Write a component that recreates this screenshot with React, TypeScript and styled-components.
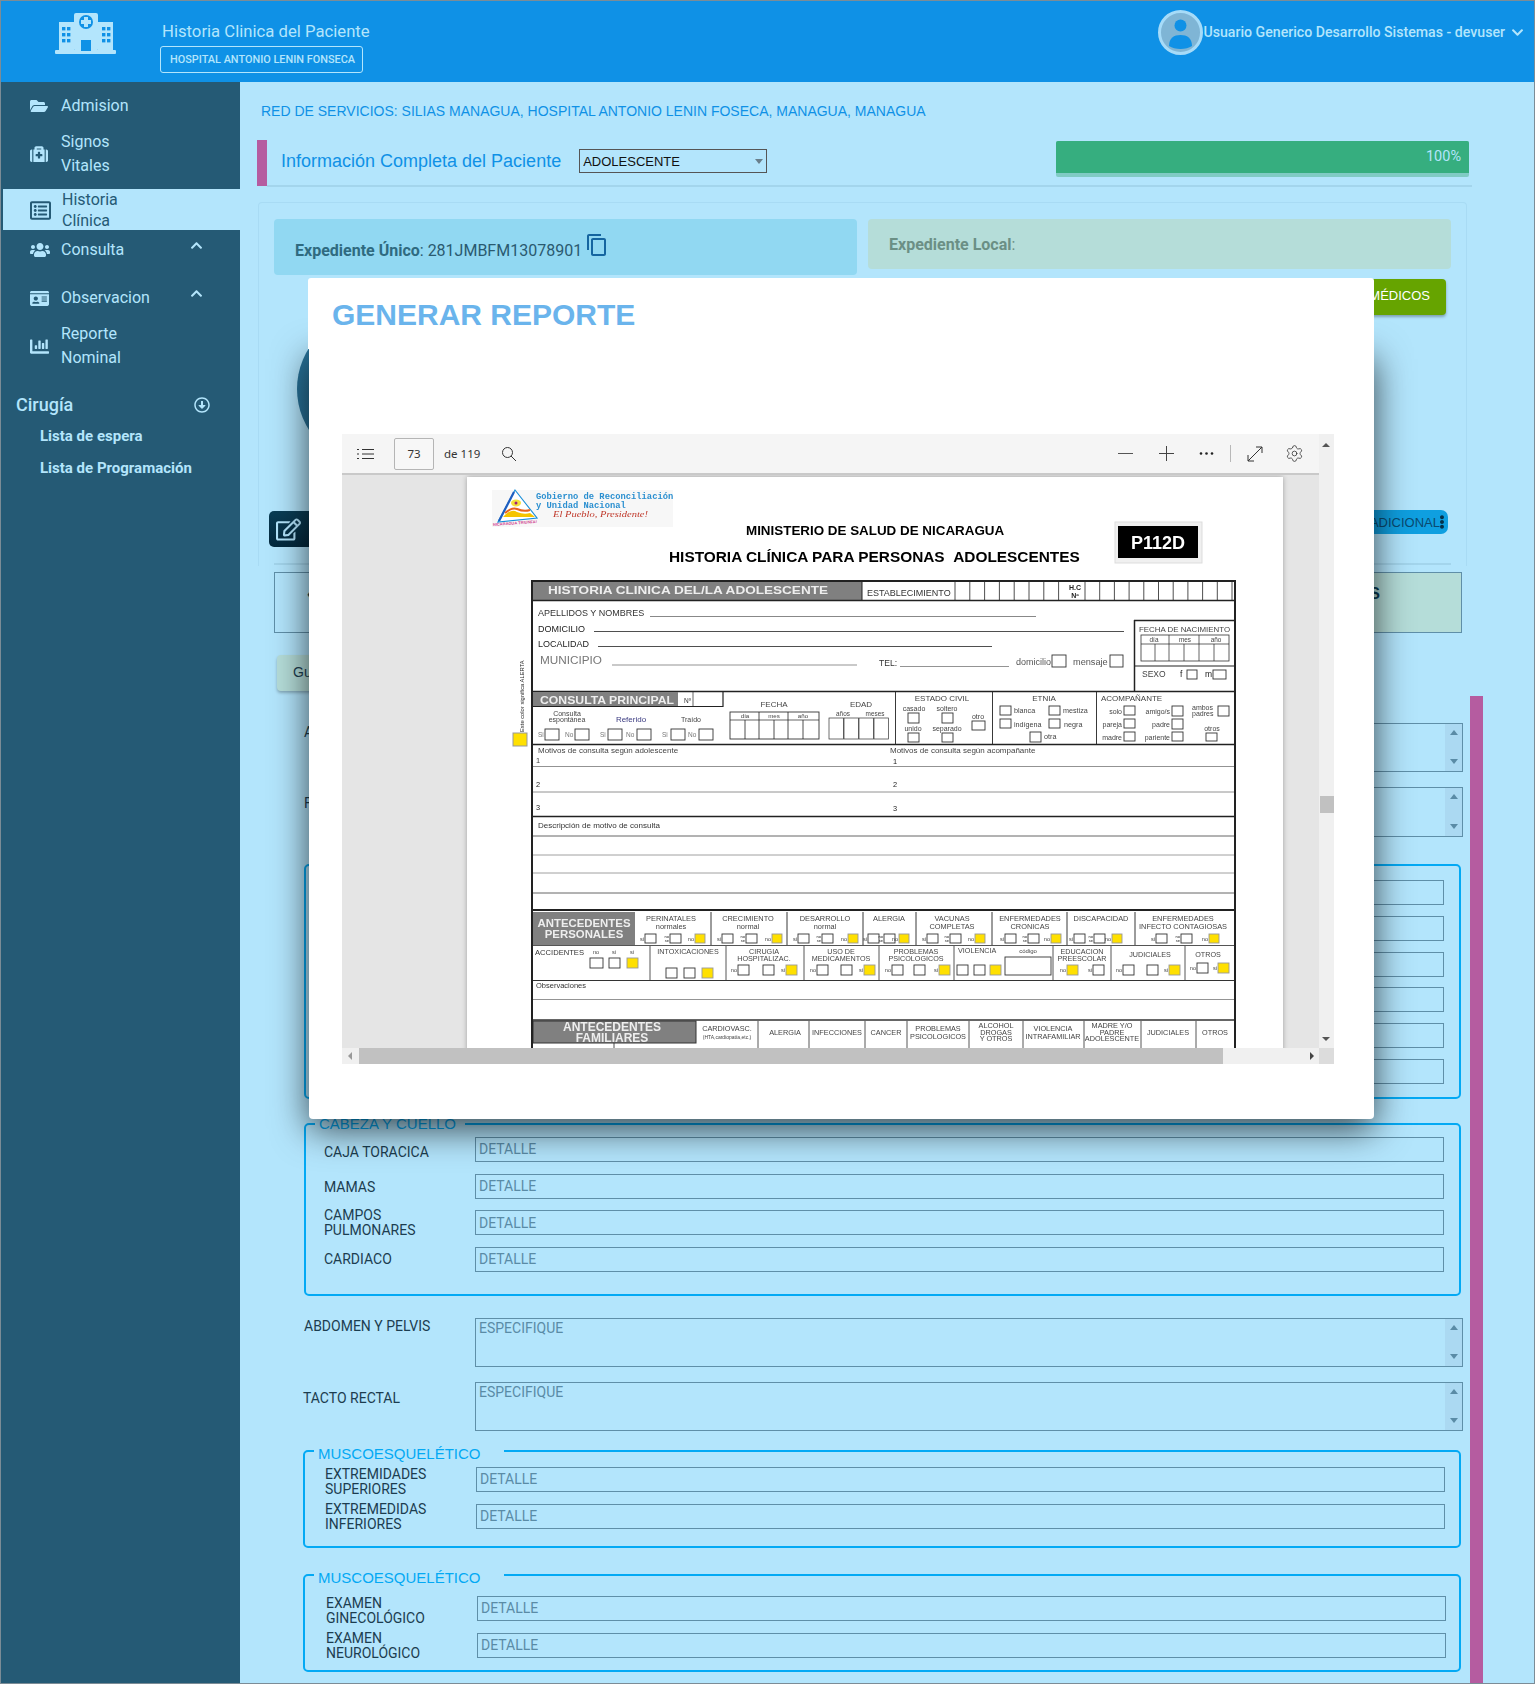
import React from "react";
import styled, { createGlobalStyle } from "styled-components";
import { FaFolderOpen, FaMedkit, FaRegListAlt, FaUsers, FaIdCard, FaChartBar, FaRegArrowAltCircleDown, FaChevronUp, FaChevronDown, FaRegEdit, FaEllipsisV } from "react-icons/fa";
import { MdContentCopy } from "react-icons/md";
import { Settings } from "lucide-react";

const Global = createGlobalStyle`
  html, body { margin: 0; padding: 0; background: #b3e5fc; }
  * { box-sizing: border-box; }
`;

const Screen = styled.div`
  position: relative; width: 1535px; height: 1684px; overflow: hidden;
  border: 1px solid #7c8c96; background: #b3e5fc;
  font-family: "Liberation Sans", Arial, sans-serif; color: #1c3d50;
`;
const Header = styled.header`
  height: 81px; background: #0f91e6; display: flex; align-items: flex-start; font-family: Roboto, sans-serif;
`;
const LogoSlot = styled.div` width: 161px; padding: 12px 0 0 54px; `;
const Brand = styled.div` padding-top: 21px; display: flex; flex-direction: column; align-items: flex-start; gap: 4px; `;
const BrandTitle = styled.div` font-size: 16.7px; line-height: 20px; color: #b3e5fc; `;
const BrandBadge = styled.div`
  height: 27px; margin-left: -2px; padding: 0 7px 0 9px; border: 1px solid #b3e5fc; border-radius: 3px; color: #b3e5fc;
  font-size: 10.9px; font-weight: 500; line-height: 25px; white-space: nowrap;
`;
const UserBox = styled.div` margin-left: auto; display: flex; align-items: center; padding: 9px 10px 0 0; color: #b3e5fc; `;
const Avatar = styled.div`
  width: 45px; height: 45px; border-radius: 50%; border: 3px solid #a6dbf8; background: #7fb5d5; overflow: hidden;
`;
const UserName = styled.span` font-size: 14.15px; font-weight: 500; margin: 0 6px 1px 0; white-space: nowrap; `;

const Body = styled.div` display: flex; height: 1602px; `;
const Sidebar = styled.nav`
  width: 239px; flex: none; background: #255a75; padding-top: 12px; font-family: Roboto, sans-serif; color: #b3e5fc;
`;
const MenuItem = styled.div<{ $mt?: number; $active?: boolean }>`
  display: flex; align-items: center; margin-top: ${p => p.$mt ?? 0}px; font-size: 16px;
  ${p => p.$active
    ? `margin-left: 2px; padding: 2px 0 0 27px; height: 41px; line-height: 20.5px; background: #b3e5fc; color: #255a75;`
    : `padding-left: 29px; line-height: 24px;`}
`;
const MenuIcon = styled.span<{ $active?: boolean }>`
  width: ${p => (p.$active ? 32 : 31)}px; flex: none; display: flex; align-items: center;
`;
const MenuCaret = styled.span` margin-left: auto; margin-right: 37px; display: flex; transform: translateY(-5px); `;
const GroupTitle = styled.div`
  display: flex; align-items: center; justify-content: space-between; margin: 23px 0 -1px; padding: 0 30px 0 15px;
  font-size: 18px; font-weight: 500; line-height: 24px;
`;
const SubLink = styled.div` margin-top: 8px; padding-left: 39px; font-size: 15px; font-weight: 700; line-height: 24px; `;

const Main = styled.main` flex: 1; min-width: 0; padding-top: 21px; `;
const Network = styled.div` margin-left: 21px; font-size: 14px; line-height: 16px; color: #0f91e6; white-space: nowrap; `;
const TitleBar = styled.div` display: flex; align-items: flex-start; margin: 21px 0 0 17px; width: 1215px; height: 47px; `;
const Accent = styled.div` width: 10px; height: 46px; flex: none; background: #b55ca0; `;
const TitleInner = styled.div`
  flex: 1; height: 47px; display: flex; align-items: flex-start; border-bottom: 2px solid #a3d5ec; padding: 1px 3px 0 14px;
`;
const PageTitle = styled.h1` margin: 9px 18px 0 0; font-size: 18px; font-weight: 400; line-height: 22px; color: #0f91e6; white-space: nowrap; `;
const SelectWrap = styled.div`
  position: relative; width: 188px; height: 24px; margin-top: 8px;
  &::after { content: ""; position: absolute; right: 4px; top: 10px; border: 4px solid transparent; border-top: 5px solid #6a7f8b; border-bottom: 0; }
`;
const Select = styled.select`
  appearance: none; width: 100%; height: 100%; border: 1px solid #555; background: transparent; padding: 0 0 0 3px;
  font: 13px "Liberation Sans", Arial, sans-serif; color: #111; border-radius: 0;
`;
const ProgressTrack = styled.div` margin-left: auto; width: 413px; height: 36px; border-radius: 2px; background: #80cbc4; overflow: hidden; `;
const ProgressFill = styled.div`
  height: 32px; background: #36ae7f; color: #b3e5fc; text-align: right; padding-right: 8px;
  font: 14.5px/32px Roboto, sans-serif;
`;

const Card = styled.section`
  margin: 15px 0 0 18px; width: 1209px; height: 364px; padding: 16px 15px 0;
  border: 1px solid #a8dbf4; border-bottom: 0; border-radius: 4px 4px 0 0; font-family: Roboto, sans-serif;
`;
const ExpRow = styled.div` display: grid; grid-template-columns: 583px 583px; gap: 11px; align-items: start; `;
const ExpUnique = styled.div`
  height: 56px; background: #91d8f2; border-radius: 4px; padding: 6px 0 0 21px; display: flex; align-items: center; gap: 3px;
  font-size: 16px; color: #2a5a70;
  b { color: #2f6a80; font-weight: 700; }
  svg { color: #1565a0; transform: translateY(-5px); }
`;
const ExpLocal = styled.div`
  height: 50px; background: #b5ddd9; border-radius: 4px; padding-left: 21px; font-size: 16px; line-height: 52px; color: #6b8f85;
  b { font-weight: 700; }
`;
const ActionRow = styled.div` display: flex; justify-content: flex-end; margin-top: 4px; padding-right: 5px; `;
const GreenButton = styled.button`
  height: 36px; width: 240px; border: 0; border-radius: 4px; background: #66a400; color: #fff; text-align: right; padding: 0 16px 4px 0;
  font: 13px "Liberation Sans", Arial, sans-serif; box-shadow: 0 2px 3px rgba(0,0,0,.3);
`;
const PatientCircle = styled.div`
  width: 152px; height: 152px; margin: -2px 0 0 23px; border-radius: 50%;
  background: radial-gradient(circle at 70% 50%, #3f93bd, #226a90);
`;
const ToolsRow = styled.div` display: flex; justify-content: space-between; align-items: flex-start; margin: 46px 3px 0 -5px; `;
const EditButton = styled.button`
  height: 36px; width: 120px; border: 0; border-radius: 5px; background: linear-gradient(#0a3d55, #04293d); color: #b3e5fc;
  display: flex; align-items: center; gap: 8px; padding: 0 0 0 7px; font: 14px Roboto, sans-serif;
`;
const ExtraButton = styled.button`
  height: 24px; width: 200px; margin-top: -1px; border: 0; border-radius: 7px; background: #0f9fe0; color: #0a4a70; display: flex; align-items: center;
  justify-content: flex-end; padding: 0; font: 13px "Liberation Sans", Arial, sans-serif; white-space: nowrap;
  svg { margin: 0 -1px 0 -5px; flex: none; }
`;
const CardRule = styled.div` margin-top: 16px; height: 2px; background: #a3d5ec; `;

const TabsRow = styled.div` display: grid; grid-template-columns: 600px 588px; margin: 6px 0 0 34px; width: 1188px; height: 61px; `;
const TabLeft = styled.div` border: 1px solid #5f8fa8; border-right: 0; padding: 12px 0 0 32px; font-size: 16px; font-weight: 700; color: #0a3d55; `;
const TabRight = styled.div` border: 1px solid #5f8fa8; border-left: 0; background: #b5ddd9; text-align: right; padding: 12px 81px 0 0; font-size: 16px; font-weight: 700; color: #0a3d55; `;
const SaveButton = styled.button`
  display: block; margin: 22px 0 0 37px; height: 36px; width: 110px; border: 0; border-radius: 4px; background: #b5ddd9; color: #1c3d50;
  text-align: left; padding: 0 0 2px 16px; font: 14px "Liberation Sans", Arial, sans-serif; box-shadow: 0 2px 3px rgba(0,0,0,.25);
`;
const FormArea = styled.div` display: flex; margin: 5px 0 0 63px; align-items: stretch; font-family: Roboto, sans-serif; `;
const FormColumn = styled.div` width: 1160px; flex: none; padding-top: 27px; `;
const SideStrip = styled.div` width: 13px; margin-left: 7px; height: 988px; background: #b55ca0; flex: none; `;

const AreaRow = styled.div<{ $mt?: number; $labelTop?: number; $shift?: number }>`
  display: grid; grid-template-columns: ${p => 171 + (p.$shift ?? 0)}px 1fr; margin-top: ${p => p.$mt ?? 0}px;
  font-size: 14px; line-height: 16px; padding-left: ${p => (p.$shift ? 0 : 1)}px;
  > label { padding-top: ${p => p.$labelTop ?? 0}px; }
`;
const AreaBox = styled.div<{ $h?: number }>` display: flex; height: ${p => p.$h ?? 49}px; border: 1px solid #5f8fa8; `;
const AreaInput = styled.textarea`
  flex: 1; border: 0; background: transparent; resize: none; padding: 1px 3px; outline: 0;
  font: 14px/16px Roboto, sans-serif; color: #1c3d50;
  &::placeholder { color: #5a8ba6; opacity: 1; }
`;
const AreaScroll = styled.div`
  width: 17px; background: #abd9f2; display: flex; flex-direction: column; justify-content: space-between; align-items: center; padding: 6px 0 7px;
`;
const ArrowUp = styled.i` width: 0; height: 0; border: 4.5px solid transparent; border-top: 0; border-bottom: 5px solid #5a8ba6; `;
const ArrowDown = styled.i` width: 0; height: 0; border: 4.5px solid transparent; border-bottom: 0; border-top: 5px solid #5a8ba6; `;

const Group = styled.fieldset<{ $mt: number; $ml?: number; $pt: number; $pb: number; $pl: number; $pr: number }>`
  margin: ${p => p.$mt}px 2px 0 ${p => p.$ml ?? 0}px; min-width: 0; padding: ${p => p.$pt}px ${p => p.$pr}px ${p => p.$pb}px ${p => p.$pl}px;
  border: 2px solid #03a9f4; border-radius: 5px; display: flex; flex-direction: column;
`;
const Legend = styled.legend<{ $pr: number; $pt?: number; $ml: number }>`
  margin-left: ${p => p.$ml}px; padding: ${p => p.$pt ?? 0}px ${p => p.$pr}px 0 4px;
  font: 15px/16px "Liberation Sans", Arial, sans-serif; color: #03a9f4; white-space: nowrap;
`;
const Rows = styled.div<{ $gap: number }>` display: flex; flex-direction: column; gap: ${p => p.$gap}px; `;
const Row = styled.div<{ $drop?: number }>`
  display: grid; grid-template-columns: 151px 1fr; grid-template-rows: 25px; align-items: center; height: 25px; font-size: 14px; line-height: 15px;
  > span { padding-top: ${p => p.$drop ?? 0}px; }
`;
const Input = styled.input`
  width: 100%; height: 25px; border: 1px solid #5f8fa8; background: transparent; padding: 0 3px; outline: 0; border-radius: 0;
  font: 14px Roboto, sans-serif;
  &::placeholder { color: #5a8ba6; opacity: 1; }
`;

/* modal */
const Modal = styled.div` position: absolute; left: 307px; top: 277px; width: 1066px; `;
const ModalHead = styled.div`
  position: relative; z-index: 1; height: 71px; background: #fff; border-radius: 3px 3px 0 0; padding: 17px 0 0 24px;
  font-size: 30px; font-weight: 700; line-height: 40px; color: #6ab4ec;
`;
const ModalBody = styled.div`
  height: 770px; margin-left: 1px; background: #fff; border-radius: 0 0 4px 4px; padding: 85px 0 0 33px; box-shadow: 0 10px 36px rgba(0,0,0,.7);
`;
const Viewer = styled.div`
  width: 992px; height: 630px; display: grid; grid-template-columns: 977px 15px; grid-template-rows: 614px 16px; background: #f0f0f0;
`;
const ViewerMain = styled.div` display: flex; flex-direction: column; min-height: 0; `;
const PdfBar = styled.div`
  height: 41px; flex: none; background: #f5f5f5; border-bottom: 2px solid #c9c9c9; display: flex; align-items: center; color: #333;
  font: 11.5px "Noto Sans", sans-serif; padding-left: 15px;
`;
const PageInput = styled.div`
  width: 40px; height: 32px; margin: 0 10px 0 20px; border: 1px solid #b5b5b5; border-radius: 2px; text-align: center; line-height: 30px; background: #f7f7f7;
`;
const BarIcon = styled.svg<{ $ml: number }>` margin-left: ${p => p.$ml}px; flex: none; `;
const BarSep = styled.div` width: 1px; height: 17px; margin-left: 16px; background: #b8b8b8; `;
const GearWrap = styled.span` display: flex; margin-left: 22px; color: #333; `;
const PdfCanvas = styled.div` flex: 1; min-height: 0; background: #e5e5e5; padding: 2px 0 0 125px; overflow: hidden; `;
const PdfPage = styled.div` width: 816px; height: 600px; background: #fff; box-shadow: 0 0 5px rgba(0,0,0,.3); `;
const FormSvg = styled.svg` display: block; filter: blur(.4px); font-family: "Liberation Sans", Arial, sans-serif; `;
const VScroll = styled.div` position: relative; background: #f0f0f0; `;
const ScrollThumbV = styled.div` position: absolute; left: 1px; right: 0; top: 362px; height: 17px; background: #c1c1c1; `;
const TriUp = styled.i` position: absolute; left: 3px; top: 9px; border: 4.5px solid transparent; border-top: 0; border-bottom: 4px solid #555; `;
const TriDown = styled.i` position: absolute; left: 3px; bottom: 7px; border: 4.5px solid transparent; border-bottom: 0; border-top: 4px solid #555; `;
const HScroll = styled.div` display: flex; align-items: center; background: #f0f0f0; height: 16px; `;
const TriLeft = styled.i` width: 17px; display: block; position: relative; &::before { content: ""; position: absolute; left: 6px; top: -4px; border: 4px solid transparent; border-left: 0; border-right: 4px solid #999; } `;
const ThumbH = styled.div` width: 864px; height: 16px; background: #c1c1c1; `;
const TriRight = styled.i` margin-left: auto; margin-right: 5px; border: 4px solid transparent; border-right: 0; border-left: 4px solid #444; `;
const Corner = styled.div` background: #dcdcdc; `;

const ink = "#222";
const Tx = ({ x, y, s, z = 7.2, a = "start", f = "#444", b = false, l, ff }: { x: number; y: number; s: string; z?: number; a?: "start" | "middle" | "end"; f?: string; b?: boolean; l?: number; ff?: string }) => (
  <text x={x} y={y} fontSize={z} textAnchor={a} fill={f} fontWeight={b ? 700 : 400} textLength={l} lengthAdjust={l ? "spacingAndGlyphs" : undefined} fontFamily={ff}>{s}</text>
);
const Bx = ({ x, y, w = 11, h = 10, yl = false }: { x: number; y: number; w?: number; h?: number; yl?: boolean }) => (
  <rect x={x} y={y} width={w} height={h} fill={yl ? "#ffe000" : "#fff"} stroke={yl ? "#999" : "#333"} strokeWidth={0.9} />
);
const Ln = ({ x1, y1, x2, y2, w = 1, c = ink }: { x1: number; y1: number; x2: number; y2: number; w?: number; c?: string }) => (
  <line x1={x1} y1={y1} x2={x2} y2={y2} stroke={c} strokeWidth={w} />
);

const row1: { c: number; t: string[]; xs: number[] }[] = [
  { c: 671, t: ["PERINATALES", "normales"], xs: [645, 670, 695] },
  { c: 748, t: ["CRECIMIENTO", "normal"], xs: [722, 746, 772] },
  { c: 825, t: ["DESARROLLO", "normal"], xs: [798, 822, 848] },
  { c: 889, t: ["ALERGIA"], xs: [868, 884, 899] },
  { c: 952, t: ["VACUNAS", "COMPLETAS"], xs: [927, 950, 975] },
  { c: 1030, t: ["ENFERMEDADES", "CRONICAS"], xs: [1005, 1028, 1051] },
  { c: 1101, t: ["DISCAPACIDAD"], xs: [1074, 1094, 1112] },
  { c: 1183, t: ["ENFERMEDADES", "INFECTO CONTAGIOSAS"], xs: [1156, 1181, 1209] },
];
const row2: { c: number; t: string[]; xs: number[]; y: number; yl: number }[] = [
  { c: 688, t: ["INTOXICACIONES"], xs: [666, 684, 702], y: 968, yl: 2 },
  { c: 764, t: ["CIRUGIA", "HOSPITALIZAC."], xs: [738, 763, 786], y: 965, yl: 2 },
  { c: 841, t: ["USO DE", "MEDICAMENTOS"], xs: [817, 841, 864], y: 965, yl: 2 },
  { c: 916, t: ["PROBLEMAS", "PSICOLOGICOS"], xs: [892, 914, 939], y: 965, yl: 2 },
  { c: 1082, t: ["EDUCACION", "PREESCOLAR"], xs: [1067, 1093], y: 965, yl: 0 },
  { c: 1150, t: ["JUDICIALES"], xs: [1123, 1147, 1169], y: 965, yl: 2 },
  { c: 1208, t: ["OTROS"], xs: [1197, 1218], y: 963, yl: 1 },
];
const famCols: { c: number; t: string[] }[] = [
  { c: 727, t: ["CARDIOVASC.", "(HTA,cardiopatía,etc.)"] },
  { c: 785, t: ["ALERGIA"] },
  { c: 837, t: ["INFECCIONES"] },
  { c: 886, t: ["CANCER"] },
  { c: 938, t: ["PROBLEMAS", "PSICOLOGICOS"] },
  { c: 996, t: ["ALCOHOL", "DROGAS", "Y OTROS"] },
  { c: 1053, t: ["VIOLENCIA", "INTRAFAMILIAR"] },
  { c: 1112, t: ["MADRE Y/O", "PADRE", "ADOLESCENTE"] },
  { c: 1168, t: ["JUDICIALES"] },
  { c: 1215, t: ["OTROS"] },
];
const range = (from: number, step: number, n: number) => Array.from({ length: n }, (_, i) => from + i * step);

const FormSheet = () => (
  <FormSvg width={816} height={600} viewBox="467 477 816 600">
    {/* logo */}
    <rect x={492} y={490} width={181} height={37} fill="#f7f7f7" />
    <path d="M515 490 L537 518 L498 522 Z" fill="#fff" stroke="#1a8fd8" strokeWidth={1.2} />
    <path d="M499 521 L514 492" stroke="#1f5fc0" strokeWidth={2.2} fill="none" />
    <path d="M503 517 q8 -9 14 -5 q7 3 13 1 l5 4 Z" fill="#f5c400" />
    <path d="M505 513 q7 -6 12 -4 q7 3 13 1" stroke="#e8641e" strokeWidth={2} fill="none" />
    <ellipse cx={516} cy={503} rx={5} ry={3.4} fill="#f5e03a" />
    <circle cx={516} cy={503} r={1.5} fill="#a0207a" />
    <text transform="translate(493 526) rotate(-4)" fontSize={4} fontWeight={700} fill="#d03a8c">NICARAGUA TRIUNFA!</text>
    <Tx x={536} y={499} s="Gobierno de Reconciliación" z={8.8} f="#2a8fd0" b ff="Liberation Mono, monospace" />
    <Tx x={536} y={508} s="y Unidad Nacional" z={8.8} f="#2a8fd0" b ff="Liberation Mono, monospace" />
    <text x={553} y={517} fontSize={8} fontStyle="italic" fill="#c0392b" fontFamily="Liberation Serif, serif" textLength={95} lengthAdjust="spacingAndGlyphs">El Pueblo, Presidente!</text>

    <Tx x={746} y={535} s="MINISTERIO DE SALUD DE NICARAGUA" z={13.4} f="#000" b />
    <Tx x={669} y={562} s={"HISTORIA CLÍNICA PARA PERSONAS \u00a0ADOLESCENTES"} z={15.4} f="#000" b />
    <rect x={1115} y={522} width={87} height={41} fill="#f0f0f0" stroke="#ddd" />
    <rect x={1118} y={526} width={80} height={32} fill="#000" />
    <Tx x={1158} y={549} s="P112D" z={18} a="middle" f="#fff" b />

    {/* header strip */}
    <rect x={533} y={582} width={329} height={18} fill="#808080" />
    <Tx x={548} y={594} s="HISTORIA CLINICA DEL/LA ADOLESCENTE" z={11.8} f="#eee" b l={280} />
    <Tx x={867} y={596} s="ESTABLECIMIENTO" z={9} f="#333" />
    <Ln x1={533} y1={600.5} x2={1234} y2={600.5} w={1.4} />
    <Ln x1={862} y1={582} x2={862} y2={600} />
    {range(955, 14.8, 8).map(x => <Ln key={x} x1={x} y1={582} x2={x} y2={600} w={0.8} />)}
    <Tx x={1075} y={590} s="H.C" z={7} a="middle" f="#222" b />
    <Tx x={1075} y={598} s="Nº" z={7} a="middle" f="#222" b />
    {range(1085, 14.7, 11).map(x => <Ln key={x} x1={x} y1={582} x2={x} y2={600} w={0.8} />)}

    <Tx x={538} y={616} s="APELLIDOS Y NOMBRES" z={9} f="#333" />
    <Ln x1={650} y1={616.5} x2={1036} y2={616.5} w={0.7} c="#555" />
    <Tx x={538} y={632} s="DOMICILIO" z={9} f="#222" />
    <Ln x1={594} y1={631.5} x2={1124} y2={631.5} w={0.8} />
    <Tx x={538} y={647} s="LOCALIDAD" z={9} f="#222" />
    <Ln x1={598} y1={646.5} x2={992} y2={646.5} w={0.8} />
    <Tx x={540} y={664} s="MUNICIPIO" z={10} f="#777" l={62} />
    <Ln x1={612} y1={665} x2={857} y2={665} w={0.7} c="#666" />
    <Tx x={879} y={666} s="TEL:" z={8.6} f="#333" />
    <Ln x1={900} y1={666.5} x2={1009} y2={666.5} w={0.7} c="#666" />
    <Tx x={1016} y={665} s="domicilio" z={9} f="#555" />
    <Bx x={1052} y={655} w={14} h={12} />
    <Tx x={1073} y={665} s="mensaje" z={9.2} f="#555" />
    <Bx x={1110} y={655} w={13} h={12} />

    <Ln x1={1134.5} y1={620} x2={1134.5} y2={691} w={1.5} />
    <Ln x1={1134} y1={620.5} x2={1234} y2={620.5} w={1.4} />
    <Tx x={1139} y={632} s="FECHA DE NACIMIENTO" z={7.9} f="#444" />
    <rect x={1141} y={635} width={88} height={26} fill="none" stroke="#333" strokeWidth={0.8} />
    <Ln x1={1141} y1={644} x2={1229} y2={644} w={0.7} />
    {[1155, 1169, 1184, 1199, 1214].map(x => <Ln key={x} x1={x} y1={x === 1169 || x === 1199 ? 635 : 644} x2={x} y2={661} w={0.7} />)}
    <Tx x={1154} y={642} s="día" z={6.4} a="middle" />
    <Tx x={1185} y={642} s="mes" z={6.4} a="middle" />
    <Tx x={1216} y={642} s="año" z={6.4} a="middle" />
    <Ln x1={1134} y1={666} x2={1234} y2={666} w={1.2} />
    <Tx x={1142} y={677} s="SEXO" z={8.5} f="#444" />
    <Tx x={1180} y={677} s="f" z={8.5} f="#222" />
    <Bx x={1187} y={670} w={10} h={9} />
    <Tx x={1205} y={677} s="m" z={8.5} f="#222" />
    <Bx x={1213} y={670} w={13} h={9} />

    {/* consulta */}
    <Ln x1={533} y1={691.5} x2={1234} y2={691.5} w={1.4} />
    <rect x={533} y={692} width={145} height={14} fill="#808080" />
    <Tx x={540} y={703.5} s="CONSULTA PRINCIPAL" z={10.6} f="#eee" b l={134} />
    <Tx x={684} y={703} s="Nº" z={6.5} f="#333" />
    <Ln x1={693} y1={692} x2={693} y2={706} w={0.7} />
    <Ln x1={723} y1={692} x2={723} y2={707} w={1.2} />
    <Ln x1={533} y1={706.5} x2={723} y2={706.5} w={1.2} />
    <Tx x={567} y={716} s="Consulta" z={7} a="middle" />
    <Tx x={567} y={722} s="espontánea" z={7} a="middle" />
    <Tx x={631} y={722} s="Referido" z={8} a="middle" f="#3a3a80" />
    <Tx x={691} y={722} s="Traído" z={7} a="middle" />
    {[[538, 545, 565, 575], [600, 608, 626, 637], [662, 671, 688, 699]].map(([a, b, c, d]) => (
      <g key={a}>
        <Tx x={a} y={737} s="Si" z={6.5} f="#777" /><Bx x={b} y={729} w={14} h={11} />
        <Tx x={c} y={737} s="No" z={6.5} f="#777" /><Bx x={d} y={729} w={14} h={11} />
      </g>
    ))}
    <Tx x={774} y={707} s="FECHA" z={8} a="middle" />
    <rect x={730} y={712} width={89} height={27} fill="none" stroke="#333" strokeWidth={0.9} />
    <Ln x1={730} y1={720} x2={819} y2={720} w={0.7} />
    {[745, 759, 774, 788, 803].map(x => <Ln key={x} x1={x} y1={x === 759 || x === 788 ? 712 : 720} x2={x} y2={739} w={0.8} />)}
    <Tx x={745} y={718} s="día" z={6.2} a="middle" />
    <Tx x={774} y={718} s="mes" z={6.2} a="middle" />
    <Tx x={803} y={718} s="año" z={6.2} a="middle" />
    <Tx x={861} y={707} s="EDAD" z={8} a="middle" />
    <Tx x={843} y={716} s="años" z={6.4} a="middle" />
    <Tx x={875} y={716} s="meses" z={6.4} a="middle" />
    {[829, 844, 859, 874].map(x => <rect key={x} x={x} y={718} width={14.5} height={21} fill="none" stroke="#333" strokeWidth={0.7} />)}

    <Ln x1={895.5} y1={692} x2={895.5} y2={744} w={0.9} />
    <Tx x={942} y={701} s="ESTADO CIVIL" z={8} a="middle" />
    <Tx x={914} y={711} s="casado" z={7} a="middle" /><Tx x={947} y={711} s="soltero" z={7} a="middle" />
    <Bx x={908} y={713} /><Bx x={942} y={713} />
    <Tx x={978} y={719} s="otro" z={7} a="middle" /><Bx x={972} y={721} w={13} h={9} />
    <Tx x={913} y={731} s="unido" z={7} a="middle" /><Tx x={947} y={731} s="separado" z={7} a="middle" />
    <Bx x={908} y={733} h={9} /><Bx x={942} y={733} h={9} />
    <Ln x1={992.5} y1={692} x2={992.5} y2={744} w={0.9} />
    <Tx x={1044} y={701} s="ETNIA" z={8} a="middle" />
    <Bx x={1000} y={706} h={9} /><Tx x={1014} y={713} s="blanca" z={7.2} />
    <Bx x={1049} y={706} h={9} /><Tx x={1063} y={713} s="mestiza" z={7.2} />
    <Bx x={1000} y={719} h={9} /><Tx x={1014} y={727} s="indígena" z={7.2} />
    <Bx x={1049} y={719} h={9} /><Tx x={1064} y={727} s="negra" z={7.2} />
    <Bx x={1030} y={732} h={10} /><Tx x={1044} y={739} s="otra" z={7.2} />
    <Ln x1={1096.5} y1={692} x2={1096.5} y2={744} w={0.9} />
    <Tx x={1101} y={701} s="ACOMPAÑANTE" z={8} />
    <Tx x={1122} y={714} s="solo" z={7} a="end" /><Bx x={1124} y={706} h={9} />
    <Tx x={1170} y={714} s="amigo/s" z={7} a="end" /><Bx x={1172} y={706} h={10} />
    <Tx x={1192} y={710} s="ambos" z={7} /><Tx x={1192} y={716} s="padres" z={7} /><Bx x={1218} y={706} h={10} />
    <Tx x={1122} y={727} s="pareja" z={7} a="end" /><Bx x={1124} y={719} h={9} />
    <Tx x={1170} y={727} s="padre" z={7} a="end" /><Bx x={1172} y={719} h={10} />
    <Tx x={1212} y={731} s="otros" z={7} a="middle" /><Bx x={1206} y={733} h={8} />
    <Tx x={1122} y={740} s="madre" z={7} a="end" /><Bx x={1124} y={732} h={9} />
    <Tx x={1170} y={740} s="pariente" z={7} a="end" /><Bx x={1172} y={732} h={9} />

    <rect x={513} y={733} width={14} height={13} fill="#ffe000" stroke="#999" />
    <text transform="translate(524 732) rotate(-90)" fontSize={5.8} fill="#222">Este color significa ALERTA</text>

    <Ln x1={533} y1={744.5} x2={1234} y2={744.5} w={1.4} />
    <Tx x={538} y={753} s="Motivos de consulta según adolescente" z={8} />
    <Tx x={890} y={753} s="Motivos de consulta según acompañante" z={8} />
    <Tx x={536} y={763} s="1" z={7.4} /><Tx x={893} y={764} s="1" z={7.4} f="#222" />
    <Ln x1={533} y1={766.5} x2={1234} y2={766.5} w={0.8} c="#777" />
    <Tx x={536} y={787} s="2" z={7.4} f="#222" /><Tx x={893} y={787} s="2" z={7.4} f="#222" />
    <Ln x1={533} y1={792} x2={1234} y2={792} w={0.8} c="#777" />
    <Tx x={536} y={810} s="3" z={7.4} f="#222" /><Tx x={893} y={811} s="3" z={7.4} f="#222" />
    <Ln x1={533} y1={816.5} x2={1234} y2={816.5} w={1.6} />
    <Tx x={538} y={828} s="Descripción de motivo de consulta" z={8} f="#333" />
    <Ln x1={533} y1={836} x2={1234} y2={836} w={0.9} c="#555" />
    <Ln x1={533} y1={855} x2={1234} y2={855} w={0.8} c="#888" />
    <Ln x1={533} y1={873} x2={1234} y2={873} w={0.8} c="#888" />
    <Ln x1={533} y1={893} x2={1234} y2={893} w={0.9} c="#555" />
    <Ln x1={533} y1={910} x2={1234} y2={910} w={1.8} />

    {/* antecedentes personales */}
    <rect x={533} y={912} width={102} height={33} fill="#808080" />
    <Tx x={584} y={927} s="ANTECEDENTES" z={11.4} a="middle" f="#eee" b />
    <Tx x={584} y={938} s="PERSONALES" z={11.4} a="middle" f="#eee" b />
    {[711, 787, 863, 916, 992, 1067, 1135].map(x => <Ln key={x} x1={x} y1={912} x2={x} y2={945} w={0.9} />)}
    {row1.map(col => (
      <g key={col.c}>
        {col.t.map((t, i) => <Tx key={t} x={col.c} y={921 + i * 8} s={t} z={7.4} a="middle" />)}
        {col.xs.map((x, i) => <Bx key={x} x={x} y={934} w={i === 2 ? 10 : 11} h={9} yl={i === 2} />)}
        <Tx x={col.xs[0] - 1} y={941} s="si" z={5.6} a="end" />
        <Tx x={col.xs[1] - 1} y={938} s="no" z={4} a="end" f="#222" />
        <Tx x={col.xs[1] - 1} y={942} s="se" z={4} a="end" f="#222" />
        <Tx x={col.xs[2] - 1} y={941} s="no" z={5.6} a="end" />
      </g>
    ))}
    <Ln x1={533} y1={945.5} x2={1234} y2={945.5} w={1} c="#555" />
    <Tx x={535} y={955} s="ACCIDENTES" z={7.6} f="#333" />
    <Bx x={590} y={958} w={13} /><Bx x={609} y={958} w={11} /><Bx x={627} y={958} w={11} yl />
    <Tx x={596} y={954} s="no" z={5.6} a="middle" /><Tx x={614} y={954} s="si" z={5.6} a="middle" /><Tx x={632} y={954} s="si" z={5.6} a="middle" />
    {[650, 726, 804, 879, 954, 1053, 1111, 1185].map(x => <Ln key={x} x1={x} y1={946} x2={x} y2={980} w={0.9} c="#444" />)}
    {row2.map(col => (
      <g key={col.c}>
        {col.t.map((t, i) => <Tx key={t} x={col.c} y={(col.t.length === 1 && col.c !== 688 ? 957 : 954) + i * 7.4} s={t} z={7.2} a="middle" />)}
        {col.xs.map((x, i) => <Bx key={x} x={x} y={col.y} w={11} h={10} yl={i === col.yl} />)}
        {col.c !== 688 && <Tx x={col.xs[0] - 1} y={col.y + 7} s="no" z={5.6} a="end" />}
        {col.c !== 688 && <Tx x={col.xs[col.xs.length - 1] - 1} y={col.y + 7} s="si" z={5.6} a="end" />}
      </g>
    ))}
    <Tx x={958} y={953} s="VIOLENCIA" z={7.2} />
    <Tx x={1028} y={953} s="código" z={6} a="middle" />
    <Bx x={957} y={965} /><Bx x={974} y={965} /><Bx x={990} y={965} yl />
    <rect x={1005} y={957} width={46} height={18} fill="#fff" stroke="#333" strokeWidth={0.9} />
    <Ln x1={533} y1={980.5} x2={1234} y2={980.5} w={1} c="#333" />
    <Tx x={536} y={988} s="Observaciones" z={7.5} f="#333" />
    <Ln x1={533} y1={999.5} x2={1234} y2={999.5} w={0.9} c="#888" />
    <Ln x1={533} y1={1020} x2={1234} y2={1020} w={1.6} c="#333" />

    {/* antecedentes familiares */}
    <rect x={533} y={1021} width={163} height={22} fill="#808080" stroke="#333" strokeWidth={1} />
    <Tx x={612} y={1031} s="ANTECEDENTES" z={12} a="middle" f="#eee" b />
    <Tx x={612} y={1042} s="FAMILIARES" z={12} a="middle" f="#eee" b />
    {[758, 809, 865, 907, 969, 1023, 1084, 1141, 1196].map(x => <Ln key={x} x1={x} y1={1021} x2={x} y2={1050} w={0.9} c="#444" />)}
    {famCols.map(col => (
      <g key={col.c}>
        {col.t.map((t, i) => (
          <Tx key={t} x={col.c} y={(col.t.length === 1 ? 1035 : col.t.length === 2 ? 1031 : 1028) + i * (col.t.length === 3 ? 6.5 : 8)} s={t} z={t.startsWith("(") ? 5 : 7.3} a="middle" />
        ))}
      </g>
    ))}
    <Ln x1={614} y1={1043} x2={614} y2={1050} w={0.8} />

    {/* outer frame */}
    <path d="M532 1050 V581 H1235 V1050" fill="none" stroke="#222" strokeWidth={2} />
  </FormSvg>
);

const HospitalLogo = () => (
  <svg width={61} height={41} viewBox="0 0 61 41" fill="#b3e5fc">
    <rect x={0} y={37} width={61} height={4} rx={1} />
    <rect x={4} y={9} width={15} height={29} />
    <rect x={43} y={9} width={15} height={29} />
    <rect x={19} y={0} width={24} height={38} rx={2} />
    <circle cx={31} cy={9} r={7} fill="#0f91e6" />
    <path d="M29 4 h4 v3 h3 v4 h-3 v3 h-4 v-3 h-3 v-4 h3z" />
    <rect x={26} y={27} width={10} height={11} fill="#0f91e6" />
    {[7, 12].map(x => [14, 20, 26].map(y => <rect key={x + "" + y} x={x} y={y} width={3.4} height={3.4} fill="#0f91e6" />))}
    {[47, 52].map(x => [14, 20, 26].map(y => <rect key={x + "" + y} x={x} y={y} width={3.4} height={3.4} fill="#0f91e6" />))}
  </svg>
);

const UserGlyph = () => (
  <svg width={39} height={39} viewBox="0 0 39 39" fill="#0f91e6">
    <circle cx={19.5} cy={12.5} r={6} />
    <path d="M8 33 c0 -8 5 -11 11.5 -11 s11.5 3 11.5 11 c-3 2 -7 3 -11.5 3 s-8.5 -1 -11.5 -3z" />
  </svg>
);

type FieldRow = { label: React.ReactNode; drop?: number };
const Fields = ({ rows, gap }: { rows: FieldRow[]; gap: number }) => (
  <Rows $gap={gap}>
    {rows.map((r, i) => (
      <Row key={i} $drop={r.drop}>
        <span>{r.label}</span>
        <Input placeholder="DETALLE" />
      </Row>
    ))}
  </Rows>
);
const Area = ({ h }: { h?: number }) => (
  <AreaBox $h={h}>
    <AreaInput placeholder="ESPECIFIQUE" />
    <AreaScroll><ArrowUp /><ArrowDown /></AreaScroll>
  </AreaBox>
);

export default function App() {
  const progress = 100;
  return (
    <>
      <Global />
      <Screen>
        <Header>
          <LogoSlot><HospitalLogo /></LogoSlot>
          <Brand>
            <BrandTitle>Historia Clinica del Paciente</BrandTitle>
            <BrandBadge>HOSPITAL ANTONIO LENIN FONSECA</BrandBadge>
          </Brand>
          <UserBox>
            <Avatar><UserGlyph /></Avatar>
            <UserName>Usuario Generico Desarrollo Sistemas - devuser</UserName>
            <FaChevronDown size={13} />
          </UserBox>
        </Header>
        <Body>
          <Sidebar>
            <MenuItem><MenuIcon><FaFolderOpen size={18} /></MenuIcon>Admision</MenuItem>
            <MenuItem $mt={12}><MenuIcon><FaMedkit size={18} /></MenuIcon><span>Signos<br />Vitales</span></MenuItem>
            <MenuItem $mt={11} $active><MenuIcon $active><FaRegListAlt size={21} /></MenuIcon><span>Historia<br />Clínica</span></MenuItem>
            <MenuItem $mt={8}><MenuIcon><FaUsers size={20} /></MenuIcon>Consulta<MenuCaret><FaChevronUp size={13} /></MenuCaret></MenuItem>
            <MenuItem $mt={24}><MenuIcon><FaIdCard size={19} /></MenuIcon>Observacion<MenuCaret><FaChevronUp size={13} /></MenuCaret></MenuItem>
            <MenuItem $mt={12}><MenuIcon><FaChartBar size={19} /></MenuIcon><span>Reporte<br />Nominal</span></MenuItem>
            <GroupTitle>Cirugía<FaRegArrowAltCircleDown size={16} /></GroupTitle>
            <SubLink>Lista de espera</SubLink>
            <SubLink>Lista de Programación</SubLink>
          </Sidebar>
          <Main>
            <Network>RED DE SERVICIOS: SILIAS MANAGUA, HOSPITAL ANTONIO LENIN FOSECA, MANAGUA, MANAGUA</Network>
            <TitleBar>
              <Accent />
              <TitleInner>
                <PageTitle>Información Completa del Paciente</PageTitle>
                <SelectWrap>
                  <Select defaultValue="ADOLESCENTE"><option>ADOLESCENTE</option></Select>
                </SelectWrap>
                <ProgressTrack>
                  <ProgressFill style={{ width: `${progress}%` }}>{progress}%</ProgressFill>
                </ProgressTrack>
              </TitleInner>
            </TitleBar>
            <Card>
              <ExpRow>
                <ExpUnique>
                  <span><b>Expediente Único</b>: 281JMBFM13078901</span>
                  <MdContentCopy size={24} />
                </ExpUnique>
                <ExpLocal><b>Expediente Local</b>:</ExpLocal>
              </ExpRow>
              <ActionRow><GreenButton>ANTECEDENTES MÉDICOS</GreenButton></ActionRow>
              <PatientCircle />
              <ToolsRow>
                <EditButton><FaRegEdit size={25} />Editar</EditButton>
                <ExtraButton>INFORMACION ADICIONAL<FaEllipsisV size={14} color="#05324a" /></ExtraButton>
              </ToolsRow>
              <CardRule />
            </Card>
            <TabsRow>
              <TabLeft>‹ Anterior</TabLeft>
              <TabRight>SIGNOS</TabRight>
            </TabsRow>
            <SaveButton>Guardar</SaveButton>
            <FormArea>
              <FormColumn>
                <AreaRow $labelTop={1}><label>ANTECEDENTES</label><Area /></AreaRow>
                <AreaRow $mt={15} $labelTop={8}><label>FAMILIARES</label><Area h={50} /></AreaRow>
                <Group $mt={27} $ml={1} $pt={14} $pb={13} $pl={18} $pr={15}>
                  <Fields gap={10.8} rows={[{ label: "CABEZA" }, { label: "OJOS" }, { label: "OIDOS" }, { label: "NARIZ" }, { label: "BOCA" }, { label: "CUELLO" }]} />
                </Group>
                <Group $mt={17.5} $ml={1} $pt={4.5} $pb={22} $pl={18} $pr={15}>
                  <Legend $ml={-9} $pr={9}>CABEZA Y CUELLO</Legend>
                  <Fields gap={11.6} rows={[{ label: "CAJA TORACICA", drop: 7 }, { label: "MAMAS", drop: 2 }, { label: <>CAMPOS<br />PULMONARES</> }, { label: "CARDIACO" }]} />
                </Group>
                <AreaRow $mt={22} $labelTop={0}><label>ABDOMEN Y PELVIS</label><Area /></AreaRow>
                <AreaRow $mt={15} $shift={1} $labelTop={8}><label>TACTO RECTAL</label><Area /></AreaRow>
                <Group $mt={9} $pt={5} $pb={17} $pl={20} $pr={14}>
                  <Legend $ml={-11} $pr={23} $pt={6}>MUSCOESQUELÉTICO</Legend>
                  <Fields gap={12} rows={[{ label: <>EXTREMIDADES<br />SUPERIORES</>, drop: 6 }, { label: <>EXTREMEDIDAS<br />INFERIORES</>, drop: 1 }]} />
                </Group>
                <Group $mt={16.5} $pt={9.5} $pb={12} $pl={21} $pr={13}>
                  <Legend $ml={-12} $pr={23} $pt={6}>MUSCOESQUELÉTICO</Legend>
                  <Fields gap={12} rows={[{ label: <>EXAMEN<br />GINECOLÓGICO</>, drop: 6 }, { label: <>EXAMEN<br />NEUROLÓGICO</>, drop: 2 }]} />
                </Group>
              </FormColumn>
              <SideStrip />
            </FormArea>
          </Main>
        </Body>

        <Modal>
          <ModalHead>GENERAR REPORTE</ModalHead>
          <ModalBody>
            <Viewer>
              <ViewerMain>
                <PdfBar>
                  <svg width={17} height={12} viewBox="0 0 17 12" stroke="#333" fill="none">
                    <path d="M5 1.5h12M5 6h12M5 10.5h12M0 1.5h2M0 6h2M0 10.5h2" />
                  </svg>
                  <PageInput>73</PageInput>
                  de 119
                  <BarIcon $ml={21} width={16} height={16} viewBox="0 0 16 16" stroke="#333" fill="none"><circle cx={6.5} cy={6.5} r={5} /><path d="M10 10l5 5" /></BarIcon>
                  <BarIcon $ml={601} width={15} height={3} viewBox="0 0 15 3" stroke="#555"><path d="M0 1.5h15" /></BarIcon>
                  <BarIcon $ml={26} width={15} height={15} viewBox="0 0 15 15" stroke="#444"><path d="M0 7.5h15M7.5 0v15" /></BarIcon>
                  <BarIcon $ml={25} width={15} height={3} viewBox="0 0 15 3" fill="#222"><circle cx={2} cy={1.5} r={1.3} /><circle cx={7.5} cy={1.5} r={1.3} /><circle cx={13} cy={1.5} r={1.3} /></BarIcon>
                  <BarSep />
                  <BarIcon $ml={16} width={16} height={16} viewBox="0 0 16 16" stroke="#333" fill="none"><path d="M1 15L15 1M9 1h6v6M1 9v6h6" /></BarIcon>
                  <GearWrap><Settings size={19} strokeWidth={1} /></GearWrap>
                </PdfBar>
                <PdfCanvas>
                  <PdfPage><FormSheet /></PdfPage>
                </PdfCanvas>
              </ViewerMain>
              <VScroll><TriUp /><ScrollThumbV /><TriDown /></VScroll>
              <HScroll><TriLeft /><ThumbH /><TriRight /></HScroll>
              <Corner />
            </Viewer>
          </ModalBody>
        </Modal>
      </Screen>
    </>
  );
}
